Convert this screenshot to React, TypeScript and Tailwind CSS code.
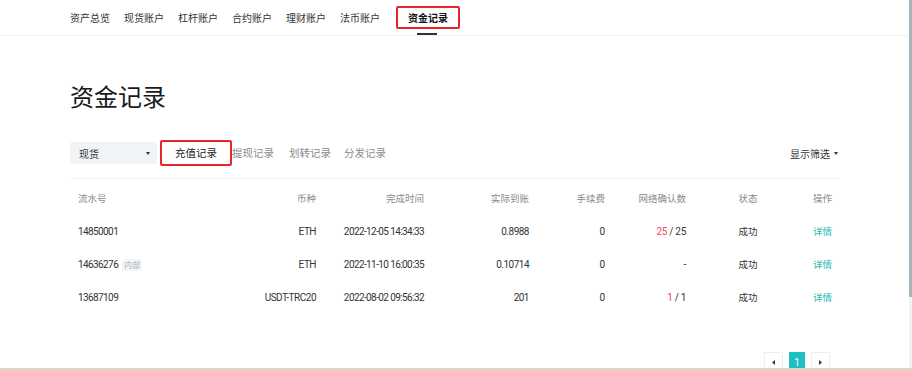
import React from "react";

const cjk = { fontFamily: '"Noto Sans CJK SC", "Noto Sans", sans-serif' };
const num = { fontFamily: '"Liberation Sans Narrow", "Roboto", "Noto Sans CJK SC", sans-serif' };

const navItems = ["资产总览", "现货账户", "杠杆账户", "合约账户", "理财账户", "法币账户"];

type Row = {
  id: string;
  tag?: string;
  coin: string;
  time: string;
  amount: string;
  fee: string;
  conf: React.ReactNode;
};

const rows: Row[] = [
  {
    id: "14850001",
    coin: "ETH",
    time: "2022-12-05 14:34:33",
    amount: "0.8988",
    fee: "0",
    conf: (
      <>
        <span className="text-[#f0465a]">25</span> / 25
      </>
    ),
  },
  {
    id: "14636276",
    tag: "内部",
    coin: "ETH",
    time: "2022-11-10 16:00:35",
    amount: "0.10714",
    fee: "0",
    conf: <>-</>,
  },
  {
    id: "13687109",
    coin: "USDT-TRC20",
    time: "2022-08-02 09:56:32",
    amount: "201",
    fee: "0",
    conf: (
      <>
        <span className="text-[#f0465a]">1</span> / 1
      </>
    ),
  },
];

const grid = "grid grid-cols-[176px_70px_108px_105px_76px_81px_24px_76px_46px] pr-2 items-center";

function Caret({ dir = "down" }: { dir?: "down" | "left" | "right" }) {
  if (dir === "down")
    return (
      <svg width="4" height="3" viewBox="0 0 4 3" className="inline-block">
        <path d="M0 0H4L2 3Z" fill="#333" />
      </svg>
    );
  if (dir === "left")
    return (
      <svg width="3" height="5" viewBox="0 0 3 5">
        <path d="M3 0V5L0 2.5Z" fill="#333" />
      </svg>
    );
  return (
    <svg width="3" height="5" viewBox="0 0 3 5">
      <path d="M0 0V5L3 2.5Z" fill="#333" />
    </svg>
  );
}

export default function App() {
  return (
    <div className="relative h-[370px] w-[912px] overflow-hidden bg-white border-b-2 border-[#d5dcbf]" style={cjk}>
      {/* Top nav */}
      <div className="h-[36px] border-b border-[#f2f2f2] flex items-center pl-[70px] text-[10px] text-[#333]">
        {navItems.map((n) => (
          <span key={n} className="mr-[14px] leading-none">
            {n}
          </span>
        ))}
        <div className="relative ml-[2px] h-[23px] w-[64px] border-2 border-[#e8232a] rounded-[2px] flex items-center justify-center">
          <span className="font-bold text-[#111] leading-none">资金记录</span>
          <span className="absolute left-[19px] top-[25px] w-[20px] h-[2px] bg-[#333]" />
        </div>
      </div>

      <div className="ml-[70px] w-[770px]">
        {/* Title */}
        <h1 className="mt-[44px] text-[24px] leading-[32px] text-[#1a1a1a] font-normal">资金记录</h1>

        {/* Tabs row */}
        <div className="mt-[28px] flex items-center h-[26px]">
          <div className="w-[87px] h-[22px] bg-[#f1f4f7] rounded-[2px] flex items-center justify-between pl-[9px] pr-[7px] text-[10px] text-[#333]">
            <span>现货</span>
            <Caret />
          </div>
          <div className="ml-[3px] w-[72px] h-[26px] border-2 border-[#e8232a] rounded-[2px] flex items-center justify-center text-[10.5px] text-[#222]">
            充值记录
          </div>
          <span className="text-[10.5px] text-[#8a8a8a] ml-0">提现记录</span>
          <span className="text-[10.5px] text-[#8a8a8a] ml-[15px]">划转记录</span>
          <span className="text-[10.5px] text-[#8a8a8a] ml-[13px]">分发记录</span>
          <div className="ml-auto mr-[2px] flex items-center gap-[4px] text-[10px] text-[#333]">
            <span>显示筛选</span>
            <Caret />
          </div>
        </div>

        <div className="mt-[12px] border-b border-[#f0f0f0]" />

        {/* Table header */}
        <div className={`${grid} h-[34px] mt-[2px] text-[9.5px] text-[#8a8a8a]`}>
          <span className="pl-2">流水号</span>
          <span className="text-right">币种</span>
          <span className="text-right">完成时间</span>
          <span className="text-right">实际到账</span>
          <span className="text-right">手续费</span>
          <span className="text-right">网络确认数</span>
          <span />
          <span className="text-center">状态</span>
          <span className="text-right">操作</span>
        </div>

        {/* Rows */}
        {rows.map((r) => (
          <div key={r.id} className={`${grid} h-[33px] text-[10px] text-[#333]`}>
            <span className="pl-2 flex items-center gap-[4px]">
              <span className="tracking-[-0.6px]" style={num}>{r.id}</span>
              {r.tag && (
                <span className="text-[8px] leading-[12px] px-[2px] bg-[#f3f5f7] text-[#aab0b5]">{r.tag}</span>
              )}
            </span>
            <span className="text-right tracking-[-0.5px]" style={num}>{r.coin}</span>
            <span className="text-right tracking-[-0.6px]" style={num}>{r.time}</span>
            <span className="text-right tracking-[-0.5px]" style={num}>{r.amount}</span>
            <span className="text-right" style={num}>{r.fee}</span>
            <span className="text-right tracking-[-0.3px]" style={num}>{r.conf}</span>
            <span />
            <span className="text-center text-[9.5px]">成功</span>
            <span className="text-right text-[9.5px] text-[#1cb8b8]">详情</span>
          </div>
        ))}

        {/* Pagination */}
        <div className="mt-[38px] flex justify-end gap-[6px] pr-[10px]">
          <div className="w-[19px] h-[20px] border border-[#eeeeee] flex items-center justify-center bg-white">
            <Caret dir="left" />
          </div>
          <div className="w-[16px] h-[20px] bg-[#1ebfc0] text-white text-[10px] flex items-center justify-center" style={num}>
            1
          </div>
          <div className="w-[19px] h-[20px] border border-[#eeeeee] flex items-center justify-center bg-white">
            <Caret dir="right" />
          </div>
        </div>
      </div>

      {/* scrollbar */}
      <div className="absolute right-0 top-0 w-[3px] h-full bg-[#eef3f8]">
        <div className="w-full h-[297px] bg-[#a7b4ba]" />
      </div>
    </div>
  );
}
